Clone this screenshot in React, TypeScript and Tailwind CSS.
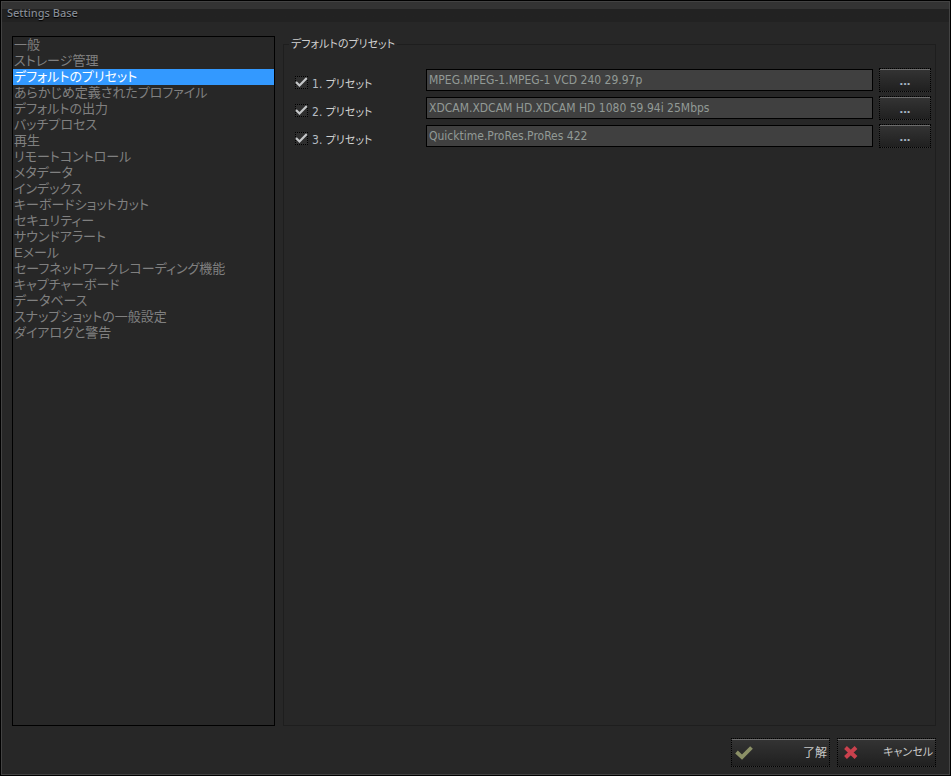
import React, { useState } from "react";

const categories = [
  "一般",
  "ストレージ管理",
  "デフォルトのプリセット",
  "あらかじめ定義されたプロファイル",
  "デフォルトの出力",
  "バッチプロセス",
  "再生",
  "リモートコントロール",
  "メタデータ",
  "インデックス",
  "キーボードショットカット",
  "セキュリティー",
  "サウンドアラート",
  "Eメール",
  "セーフネットワークレコーディング機能",
  "キャプチャーボード",
  "データベース",
  "スナップショットの一般設定",
  "ダイアログと警告",
];

const presets = [
  "MPEG.MPEG-1.MPEG-1 VCD 240 29.97p",
  "XDCAM.XDCAM HD.XDCAM HD 1080 59.94i 25Mbps",
  "Quicktime.ProRes.ProRes 422",
];

const buttonStyle =
  "border border-dotted border-black bg-linear-to-b from-[#343434] to-[#202020] shadow-[inset_0_1px_0_#6c6c6c] hover:from-[#404040] active:to-[#181818]";

function PresetRow({ index, value }: { index: number; value: string }) {
  const [checked, setChecked] = useState(true);
  const [text, setText] = useState(value);
  const id = `preset-${index}`;

  return (
    <div className="flex items-center h-6">
      <div className="flex items-center gap-1 w-[131px] shrink-0 pt-1">
        <span className="relative flex w-[13px] h-[13px]">
          <input
            type="checkbox"
            id={id}
            checked={checked}
            onChange={(e) => setChecked(e.target.checked)}
            className="peer appearance-none w-full h-full border border-dotted border-black bg-[#2e2e2e]"
          />
          <svg
            viewBox="0 0 13 13"
            className="absolute inset-0 hidden peer-checked:block pointer-events-none"
          >
            <path
              d="M1 6L4.5 9.5L11.8 2"
              fill="none"
              stroke="#c4c6c8"
              strokeWidth="2.2"
            />
          </svg>
        </span>
        <label
          htmlFor={id}
          className="pt-1 text-[11px] leading-4 text-[#d0d0d0] font-['DejaVu_Sans_Condensed','Noto_Sans_CJK_JP',sans-serif]"
        >
          <span className="text-xs text-[#b4bcc4]">{index}. </span>
          プリセット
        </label>
      </div>
      <input
        type="text"
        aria-label={`${index}. プリセット`}
        value={text}
        onChange={(e) => setText(e.target.value)}
        className="flex-1 min-w-0 h-[22px] px-0.5 border border-black bg-[#404040] text-xs text-[#929a96] outline-none font-['DejaVu_Sans_Condensed','Noto_Sans_CJK_JP',sans-serif]"
      />
      <button
        type="button"
        aria-label={`${index}. プリセットを選択`}
        className={`ml-1.5 w-[52px] h-6 text-[13px] leading-5 font-bold text-[#a9b8c6] ${buttonStyle}`}
      >
        ...
      </button>
    </div>
  );
}

function App() {
  const [selected, setSelected] = useState(2);

  return (
    <div className="min-h-screen p-px bg-black font-['Noto_Sans','Noto_Sans_CJK_JP',sans-serif] [font-feature-settings:'palt']">
      <div className="flex flex-col min-h-[calc(100vh-2px)] border border-[#434343] bg-[#272727]">
        <header className="h-5 px-[5px] bg-linear-to-b from-[#333333] from-35% to-[#222222] to-35%">
          <h1 className="text-[11px] leading-[22px] font-medium text-[#858b94] [text-shadow:0_1px_1px_#000]">
            Settings Base
          </h1>
        </header>
        <main className="flex flex-1 gap-2 pl-[10px] pt-3.5 pr-[13px]">
          <ul className="w-[263px] shrink-0 border border-black text-[13px] text-[#808080] font-['Liberation_Sans','Noto_Sans_CJK_JP',sans-serif]">
            {categories.map((name, index) => (
              <li key={name}>
                <button
                  type="button"
                  onClick={() => setSelected(index)}
                  className={
                    index === selected
                      ? "block w-full h-4 px-px text-left leading-4 whitespace-nowrap bg-[#3399ff] text-white"
                      : "block w-full h-4 px-px text-left leading-4 whitespace-nowrap"
                  }
                >
                  {name}
                </button>
              </li>
            ))}
          </ul>
          <fieldset className="flex-1 min-w-0 px-1 border border-[#1e1e1e]">
            <legend className="ml-px px-0.5 text-[11px] leading-4 text-[#d0d0d0]">
              デフォルトのプリセット
            </legend>
            <div className="flex flex-col gap-1 pt-4 pl-[7px]">
              {presets.map((value, index) => (
                <PresetRow key={value} index={index + 1} value={value} />
              ))}
            </div>
          </fieldset>
        </main>
        <footer className="flex justify-end gap-[7px] pt-3 pb-[7px] pr-[13px]">
          <button
            type="button"
            className={`flex items-center justify-between w-[99px] h-[29px] px-0.5 text-xs text-[#c8c8c8] ${buttonStyle}`}
          >
            <svg viewBox="0 0 20 16" className="w-5 h-4">
              <path
                d="M2.5 7L8 12.2L17.5 2.5"
                fill="none"
                stroke="#8b9066"
                strokeWidth="3.8"
              />
            </svg>
            了解
          </button>
          <button
            type="button"
            className={`flex items-center justify-between w-[99px] h-[29px] px-0.5 text-[11px] text-[#c8c8c8] ${buttonStyle}`}
          >
            <svg viewBox="0 0 20 16" className="w-5 h-4">
              <path
                d="M5.5 2.5L16 12.5M16 2.5L5.5 12.5"
                fill="none"
                stroke="#c9414d"
                strokeWidth="4"
              />
            </svg>
            キャンセル
          </button>
        </footer>
      </div>
    </div>
  );
}

export default App;
